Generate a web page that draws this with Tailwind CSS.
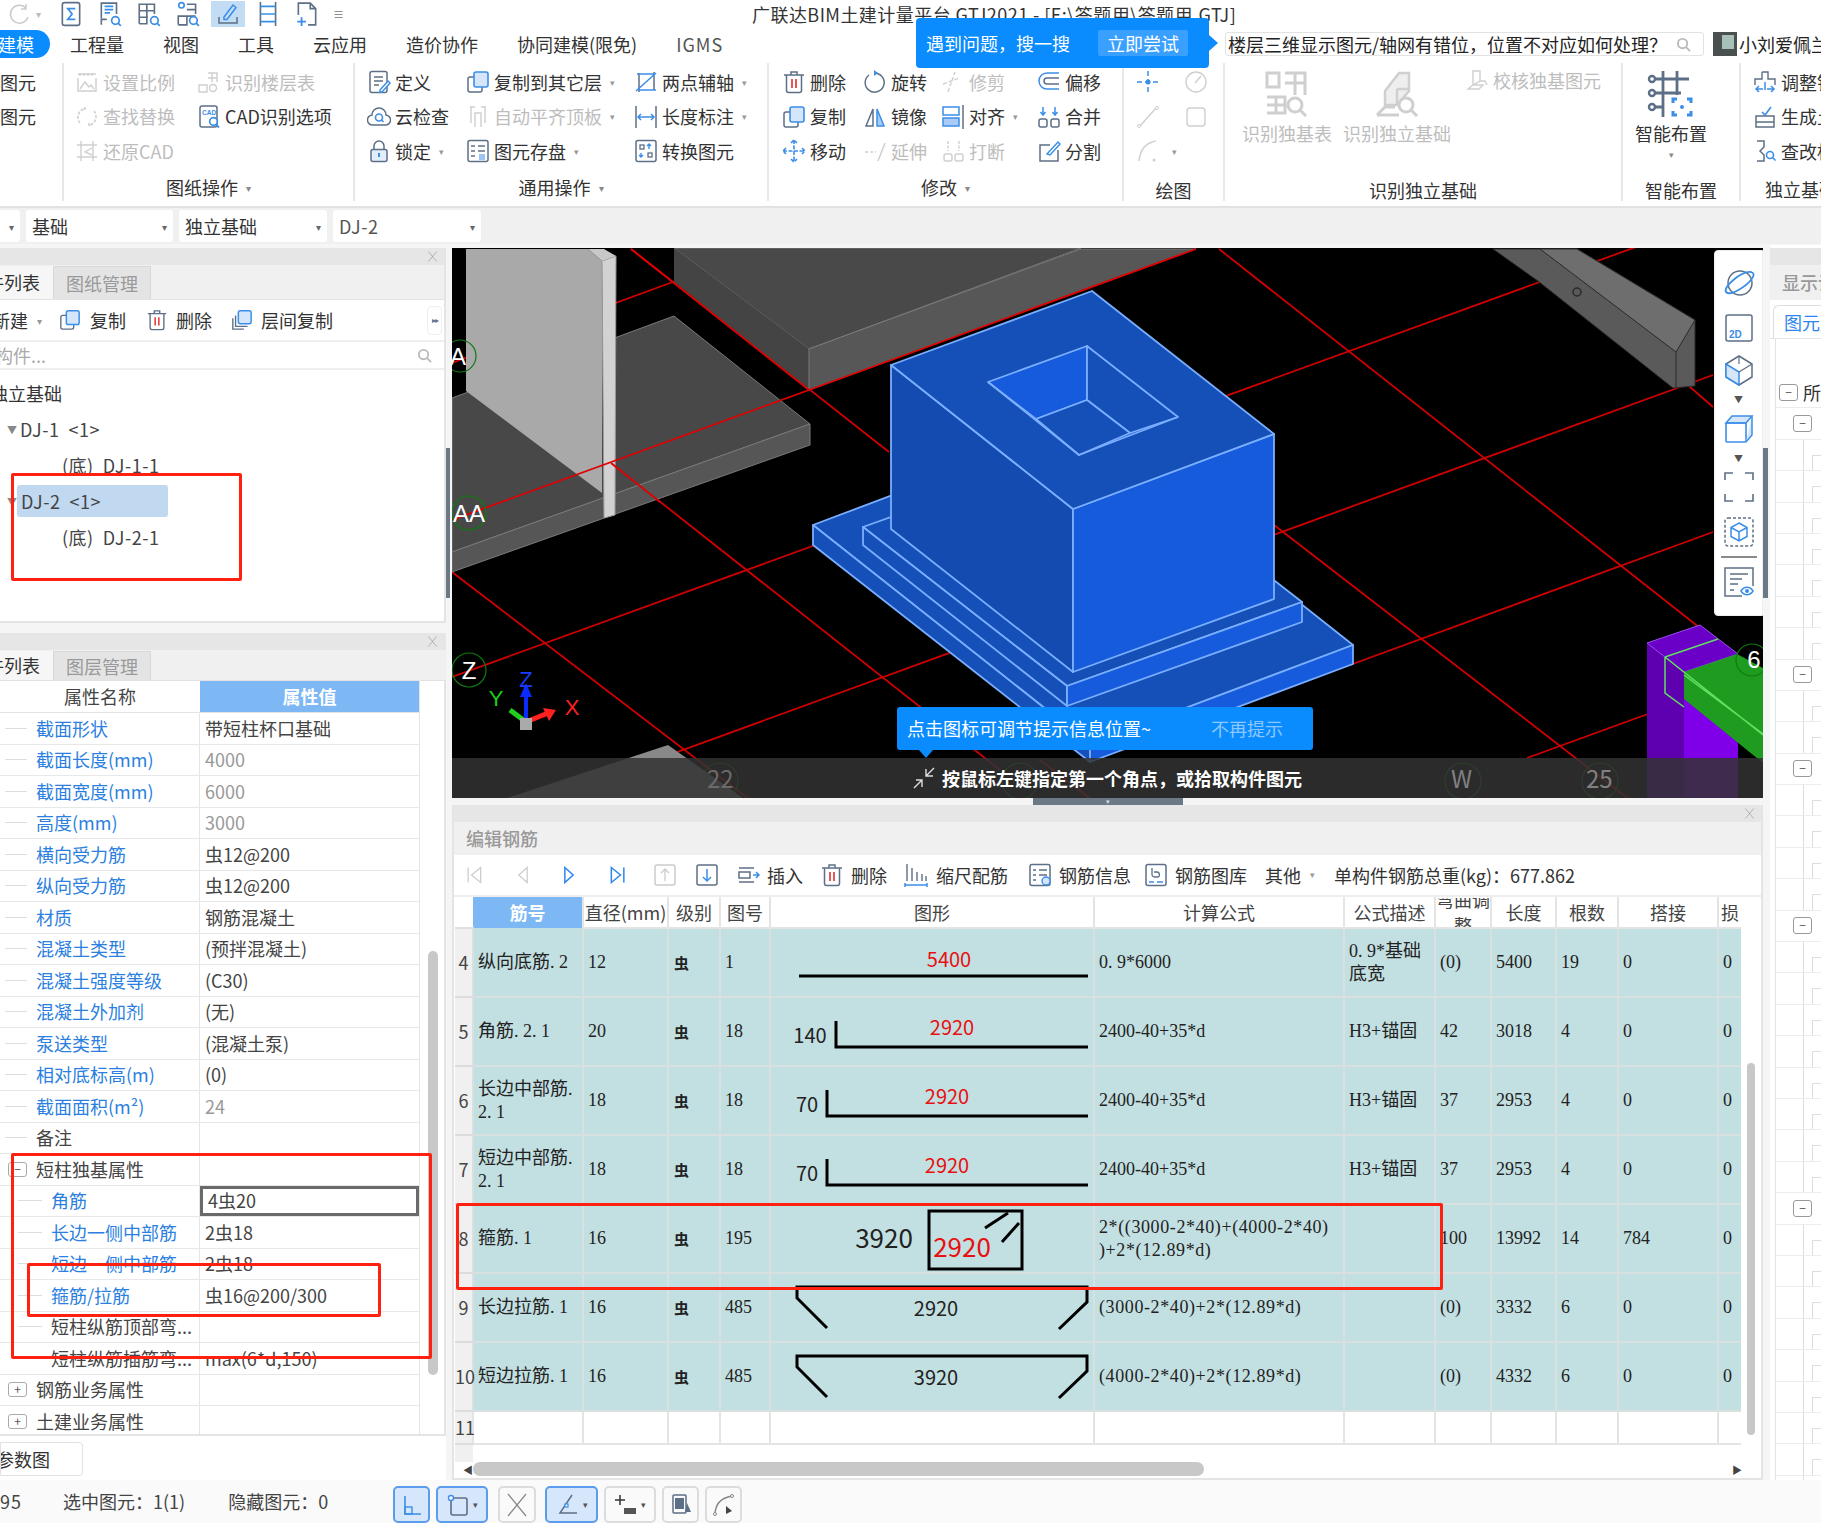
<!DOCTYPE html>
<html lang="zh">
<head>
<meta charset="UTF-8">
<title>广联达BIM土建计量平台 GTJ2021</title>
<script src="https://cdn.jsdelivr.net/npm/@tailwindcss/browser@4"></script>
</head>
<body class="bg-white">

<svg class="hidden">
  <defs>
    <symbol id="i-sum" viewBox="0 0 24 24"><rect x="4" y="1.5" width="16" height="21" rx="2" fill="none" stroke="#5d6f87" stroke-width="1.5"/><path d="M16 7H9l4 5-4 5h7" fill="none" stroke="#3b8ee8" stroke-width="1.6"/></symbol>
    <symbol id="i-planq" viewBox="0 0 24 24"><path d="M4 16V2h14v10M4 22v-5h5" fill="none" stroke="#5d6f87" stroke-width="1.5"/><path d="M7 5h8M7 8h8M7 11h5" stroke="#3b8ee8" stroke-width="1.5"/><circle cx="17" cy="18" r="3.5" fill="none" stroke="#3b8ee8" stroke-width="1.6"/><path d="M19.5 20.5l2.5 2.5" stroke="#3b8ee8" stroke-width="1.6"/></symbol>
    <symbol id="i-gridq" viewBox="0 0 24 24"><path d="M3 21V3h14v9M3 9h14M3 15h8M10 3v18H3" fill="none" stroke="#5d6f87" stroke-width="1.5"/><circle cx="17" cy="18" r="3.5" fill="none" stroke="#3b8ee8" stroke-width="1.6"/><path d="M19.5 20.5l2.5 2.5" stroke="#3b8ee8" stroke-width="1.6"/></symbol>
    <symbol id="i-grid2q" viewBox="0 0 24 24"><circle cx="6" cy="4" r="2.5" fill="none" stroke="#3b8ee8" stroke-width="1.5"/><path d="M3 22v-8h8v8H3M11 3h8v9M11 8h8M3 14h16" fill="none" stroke="#5d6f87" stroke-width="1.5"/><circle cx="17" cy="18" r="3.5" fill="none" stroke="#3b8ee8" stroke-width="1.6"/><path d="M19.5 20.5l2.5 2.5" stroke="#3b8ee8" stroke-width="1.6"/></symbol>
    <symbol id="i-pen" viewBox="0 0 24 24"><path d="M8 15L17 3l3 2.5-9 12H8z" fill="none" stroke="#3b8ee8" stroke-width="1.5"/><path d="M3 15v6h18v-6" fill="none" stroke="#5d6f87" stroke-width="1.5"/></symbol>
    <symbol id="i-cols" viewBox="0 0 24 24"><path d="M5 1v22M19 1v22" stroke="#5d6f87" stroke-width="1.5"/><path d="M5 5h14M5 12h14M5 19h14" stroke="#3b8ee8" stroke-width="1.6"/></symbol>
    <symbol id="i-docplus" viewBox="0 0 24 24"><path d="M4 13V2h11l5 5v15h-7M15 2v5h5" fill="none" stroke="#5d6f87" stroke-width="1.5"/><path d="M7 15v8M3 19h8" stroke="#3b8ee8" stroke-width="1.7"/></symbol>
    <symbol id="i-scale" viewBox="0 0 24 24"><path d="M3 4h18M5 3v3M9 3v3M13 3v3M17 3v3M21 8v13H3V8" fill="none" stroke="currentColor" stroke-width="1.4"/><path d="M5 19l5-7 4 5 2-2 3 4" fill="none" stroke="currentColor" stroke-width="1.4"/></symbol>
    <symbol id="i-tableq" viewBox="0 0 24 24"><path d="M2 22v-7h8v7H2M11 3h9v9M11 8h9M15 3v9" fill="none" stroke="currentColor" stroke-width="1.4"/><circle cx="16" cy="18" r="3.5" fill="none" stroke="currentColor" stroke-width="1.4"/></symbol>
    <symbol id="i-swap" viewBox="0 0 24 24"><path d="M5 18A9 9 0 0 1 10 3.5M19 6a9 9 0 0 1-5 14.5M10 2v4M14 18v4" fill="none" stroke="currentColor" stroke-width="1.6" stroke-dasharray="3 1.5"/></symbol>
    <symbol id="i-cadq" viewBox="0 0 24 24"><rect x="3" y="1" width="17" height="21" rx="2" fill="none" stroke="#5d6f87" stroke-width="1.5"/><text x="5" y="10" font-size="6.5" font-weight="700" fill="#3b8ee8" font-family="Liberation Sans">CAD</text><circle cx="16.5" cy="16.5" r="3.8" fill="#fff" stroke="#3b8ee8" stroke-width="1.7"/><path d="M19 19.5l3 3" stroke="#3b8ee8" stroke-width="1.8"/></symbol>
    <symbol id="i-restore" viewBox="0 0 24 24"><path d="M6 2v20M18 2v20M2 6h20M2 18h20M17 9l-7 4 7 3" fill="none" stroke="currentColor" stroke-width="1.4"/></symbol>
    <symbol id="i-def" viewBox="0 0 24 24"><rect x="3" y="1.5" width="17" height="21" rx="2" fill="none" stroke="#5d6f87" stroke-width="1.5"/><path d="M7 7h9M7 11h9M7 15h5" stroke="#5d6f87" stroke-width="1.3"/><path d="M13 20l8-9 2 2-8 9h-2z" fill="#fff" stroke="#3b8ee8" stroke-width="1.5"/></symbol>
    <symbol id="i-copy" viewBox="0 0 24 24"><rect x="2" y="7" width="14" height="15" rx="2" fill="none" stroke="#5d6f87" stroke-width="1.5"/><rect x="8" y="2" width="14" height="15" rx="2" fill="#d5e6fb" stroke="#3b8ee8" stroke-width="1.6"/></symbol>
    <symbol id="i-copy2" viewBox="0 0 24 24"><path d="M2 10v12h12M5 7v12h13" fill="none" stroke="#5d6f87" stroke-width="1.5"/><rect x="8" y="2" width="14" height="14" rx="2" fill="#d5e6fb" stroke="#3b8ee8" stroke-width="1.6"/></symbol>
    <symbol id="i-axis" viewBox="0 0 24 24"><path d="M5 3v19M20 2v18" stroke="#5d6f87" stroke-width="1.5"/><path d="M2 21L22 3M3 4h17M5 20h17" stroke="#3b8ee8" stroke-width="1.5"/></symbol>
    <symbol id="i-cloud" viewBox="0 0 24 24"><path d="M6 20a5 5 0 0 1-1-10 7 7 0 0 1 14 0 5 5 0 0 1-1 10z" fill="none" stroke="#5d6f87" stroke-width="1.5"/><circle cx="12" cy="12.5" r="3.5" fill="none" stroke="#3b8ee8" stroke-width="1.6"/><path d="M14.5 15l2 2" stroke="#3b8ee8" stroke-width="1.6"/></symbol>
    <symbol id="i-level" viewBox="0 0 24 24"><path d="M4 2h5M15 2h5M5 2v16M19 2v16" stroke="currentColor" stroke-width="1.4"/><path d="M9 22V8h6v14" fill="none" stroke="currentColor" stroke-width="1.4"/></symbol>
    <symbol id="i-dim" viewBox="0 0 24 24"><path d="M2 1v22M22 1v22" stroke="#5d6f87" stroke-width="1.5"/><path d="M4 12h16M7 9l-3 3 3 3M17 9l3 3-3 3" fill="none" stroke="#3b8ee8" stroke-width="1.5"/></symbol>
    <symbol id="i-lock" viewBox="0 0 24 24"><path d="M7 11V7a5 5 0 0 1 10 0v4" fill="none" stroke="#5d6f87" stroke-width="1.5"/><rect x="4" y="10.5" width="16" height="12" rx="2" fill="#e3eefc" stroke="#5d6f87" stroke-width="1.5"/><path d="M12 14v4" stroke="#3b8ee8" stroke-width="2"/></symbol>
    <symbol id="i-save" viewBox="0 0 24 24"><rect x="2" y="1.5" width="20" height="21" rx="2" fill="none" stroke="#5d6f87" stroke-width="1.5"/><path d="M5 7h4M12 7h7M5 12h4M12 12h7M5 17h4" stroke="#5d6f87" stroke-width="1.5"/><rect x="13" y="15" width="6" height="6" fill="#9cc5f5"/></symbol>
    <symbol id="i-conv" viewBox="0 0 24 24"><rect x="2" y="1.5" width="20" height="21" rx="2" fill="none" stroke="#5d6f87" stroke-width="1.5"/><rect x="6" y="6" width="4" height="4" fill="none" stroke="#5d6f87" stroke-width="1.3"/><rect x="14" y="14" width="4" height="4" fill="none" stroke="#5d6f87" stroke-width="1.3"/><path d="M15 10V6M7 14v4M13 7l2-2 2 2M5 16l2 2 2-2" fill="none" stroke="#3b8ee8" stroke-width="1.4"/></symbol>
    <symbol id="i-trash" viewBox="0 0 24 24"><path d="M2 5h20M9 5V2h6v3" fill="none" stroke="#5d6f87" stroke-width="1.5"/><path d="M4.5 5v15.5a2 2 0 0 0 2 2h11a2 2 0 0 0 2-2V5" fill="none" stroke="#5d6f87" stroke-width="1.5"/><path d="M10 9v9M14 9v9" stroke="#e53b3b" stroke-width="1.7"/></symbol>
    <symbol id="i-rotate" viewBox="0 0 24 24"><path d="M13 3.2A9.5 9.5 0 1 1 6 5" fill="none" stroke="#5d6f87" stroke-width="1.5"/><path d="M11 0l4 3-4 3z" fill="#3b8ee8"/></symbol>
    <symbol id="i-trim" viewBox="0 0 24 24"><path d="M2 14L18 8M7 22L14 2" fill="none" stroke="currentColor" stroke-width="1.4" stroke-dasharray="4 2"/></symbol>
    <symbol id="i-offset" viewBox="0 0 24 24"><path d="M22 3H10a8 8 0 0 0 0 16h12" fill="none" stroke="#3b8ee8" stroke-width="1.5"/><path d="M22 8H10a3 3 0 0 0 0 6h12" fill="none" stroke="#5d6f87" stroke-width="1.5"/></symbol>
    <symbol id="i-mirror" viewBox="0 0 24 24"><path d="M10 4L3 21h7z" fill="none" stroke="#5d6f87" stroke-width="1.5"/><path d="M14 4l7 17h-7z" fill="#a9cbf5" stroke="#3b8ee8" stroke-width="1.5"/></symbol>
    <symbol id="i-align" viewBox="0 0 24 24"><rect x="2" y="2" width="16" height="8" fill="none" stroke="#3b8ee8" stroke-width="1.5"/><rect x="2" y="13" width="16" height="8" fill="#a9cbf5" stroke="#3b8ee8" stroke-width="1.5"/><path d="M22 0v24" stroke="#5d6f87" stroke-width="1.5"/></symbol>
    <symbol id="i-merge" viewBox="0 0 24 24"><rect x="2" y="14" width="8" height="8" rx="2" fill="none" stroke="#5d6f87" stroke-width="1.5"/><rect x="14" y="14" width="8" height="8" rx="2" fill="none" stroke="#5d6f87" stroke-width="1.5"/><path d="M6 2v8M18 2v8M3.5 7L6 10l2.5-3M15.5 7L18 10l2.5-3" fill="none" stroke="#3b8ee8" stroke-width="1.5"/></symbol>
    <symbol id="i-move" viewBox="0 0 24 24"><path d="M12 1v22M1 12h22M9 4l3-3 3 3M9 20l3 3 3-3M4 9l-3 3 3 3M20 9l3 3-3 3" fill="none" stroke="#3b8ee8" stroke-width="1.6" stroke-dasharray="4 1.5"/></symbol>
    <symbol id="i-extend" viewBox="0 0 24 24"><path d="M2 13h11" stroke="currentColor" stroke-width="1.5" stroke-dasharray="3 2"/><path d="M15 22L22 4" stroke="currentColor" stroke-width="1.5"/></symbol>
    <symbol id="i-break" viewBox="0 0 24 24"><rect x="3" y="15" width="8" height="7" rx="2" fill="none" stroke="currentColor" stroke-width="1.4"/><rect x="14" y="15" width="8" height="7" rx="2" fill="none" stroke="currentColor" stroke-width="1.4"/><path d="M7 2v10M18 2v10" stroke="currentColor" stroke-width="1.4" stroke-dasharray="3 1.5"/></symbol>
    <symbol id="i-split" viewBox="0 0 24 24"><path d="M21 11v11H3V6h10" fill="none" stroke="#5d6f87" stroke-width="1.5"/><path d="M10 15L21 3l2 2-10 11z" fill="none" stroke="#3b8ee8" stroke-width="1.5"/></symbol>
    <symbol id="i-point" viewBox="0 0 24 24"><path d="M12 1v22M1 12h22" stroke="#3b8ee8" stroke-width="1.5" stroke-dasharray="5 3"/><circle cx="12" cy="12" r="2.5" fill="#3b8ee8"/></symbol>
    <symbol id="i-gauge" viewBox="0 0 24 24"><circle cx="12" cy="12" r="10" fill="none" stroke="currentColor" stroke-width="1.4"/><path d="M11 13l6-7" stroke="currentColor" stroke-width="1.4"/></symbol>
    <symbol id="i-line" viewBox="0 0 24 24"><path d="M3 22L21 2" stroke="currentColor" stroke-width="1.4"/><circle cx="3" cy="21" r="1.5" fill="#fff" stroke="currentColor"/><circle cx="21" cy="3" r="1.5" fill="#fff" stroke="currentColor"/></symbol>
    <symbol id="i-rect" viewBox="0 0 24 24"><rect x="3" y="3" width="18" height="18" rx="3" fill="none" stroke="currentColor" stroke-width="1.4"/></symbol>
    <symbol id="i-arc" viewBox="0 0 24 24"><path d="M3 22C4 12 8 4 20 2" fill="none" stroke="currentColor" stroke-width="1.5"/><circle cx="18" cy="21" r="1.5" fill="currentColor"/></symbol>
    <symbol id="i-bigtab" viewBox="0 0 48 48"><path d="M4 4h12v14H4zM22 4h20v22M22 14h20M32 4v22M4 28h18v16H4M4 36h18M13 28v16" fill="none" stroke="currentColor" stroke-width="3"/><circle cx="32" cy="36" r="7" fill="#fff" stroke="currentColor" stroke-width="3"/><path d="M37 41l6 6" stroke="currentColor" stroke-width="3"/></symbol>
    <symbol id="i-bigbox" viewBox="0 0 48 48"><path d="M12 22L26 4h10v18L24 36H12zM24 20h12M24 20v16" fill="#eee" stroke="currentColor" stroke-width="2.5"/><path d="M4 46l8-8h10M4 46h22" fill="none" stroke="currentColor" stroke-width="3"/><circle cx="33" cy="36" r="7" fill="#fff" stroke="currentColor" stroke-width="3"/><path d="M38 41l6 6" stroke="currentColor" stroke-width="3"/></symbol>
    <symbol id="i-check" viewBox="0 0 24 24"><path d="M8 3h7v10l-7 4zM3 21l5-4h10l-4 4z" fill="none" stroke="currentColor" stroke-width="1.4"/><path d="M15 13h5l2 4" fill="none" stroke="currentColor" stroke-width="1.4"/></symbol>
    <symbol id="i-smart" viewBox="0 0 48 48"><path d="M16 2v46M30 2v24M4 10h38M4 24h30M4 38h12" fill="none" stroke="#5d6f87" stroke-width="2.8"/><circle cx="5" cy="10" r="3" fill="#fff" stroke="#5d6f87" stroke-width="2.4"/><circle cx="5" cy="24" r="3" fill="#fff" stroke="#5d6f87" stroke-width="2.4"/><circle cx="5" cy="38" r="3" fill="#fff" stroke="#5d6f87" stroke-width="2.4"/><path d="M26 34v-4h4M40 30h4v4M44 42v4h-4M30 46h-4v-4" fill="none" stroke="#3b8ee8" stroke-width="3"/><circle cx="35" cy="38" r="2" fill="#3b8ee8"/></symbol>
    <symbol id="i-adjust" viewBox="0 0 24 24"><path d="M9 2h6v7h7v6M9 2v7H2v6" fill="none" stroke="#5d6f87" stroke-width="1.4"/><path d="M3 19h7M21 19h-7M6 16l-3 3 3 3M18 16l3 3-3 3M12 12v8" fill="none" stroke="#3b8ee8" stroke-width="1.5"/></symbol>
    <symbol id="i-gen" viewBox="0 0 24 24"><path d="M3 11h18v11H3zM3 17h18" fill="none" stroke="#5d6f87" stroke-width="1.5"/><path d="M9 7l3 3 6-8" fill="none" stroke="#3b8ee8" stroke-width="1.6"/></symbol>
    <symbol id="i-edit" viewBox="0 0 24 24"><path d="M4 2h7v6l-4 4 4 4v6H4" fill="none" stroke="#5d6f87" stroke-width="1.5"/><circle cx="17" cy="16" r="3.5" fill="none" stroke="#3b8ee8" stroke-width="1.6"/><path d="M19.5 18.5l3 3" stroke="#3b8ee8" stroke-width="1.6"/></symbol>
    <symbol id="i-first" viewBox="0 0 24 24"><path d="M5 3v18M20 3L9 12l11 9z" fill="none" stroke="currentColor" stroke-width="1.5"/></symbol>
    <symbol id="i-prev" viewBox="0 0 24 24"><path d="M17 3L7 12l10 9z" fill="none" stroke="currentColor" stroke-width="1.5"/></symbol>
    <symbol id="i-next" viewBox="0 0 24 24"><path d="M7 3l10 9-10 9z" fill="none" stroke="currentColor" stroke-width="1.8"/></symbol>
    <symbol id="i-last" viewBox="0 0 24 24"><path d="M19 3v18M4 3l11 9-11 9z" fill="none" stroke="currentColor" stroke-width="1.8"/></symbol>
    <symbol id="i-up" viewBox="0 0 24 24"><rect x="2" y="2" width="20" height="20" rx="2" fill="none" stroke="currentColor" stroke-width="1.5"/><path d="M12 18V7M8 10l4-4 4 4" fill="none" stroke="currentColor" stroke-width="1.3"/></symbol>
    <symbol id="i-down" viewBox="0 0 24 24"><rect x="2" y="2" width="20" height="20" rx="2" fill="none" stroke="#5d6f87" stroke-width="1.5"/><path d="M12 6v11M8 14l4 4 4-4" fill="none" stroke="#3b8ee8" stroke-width="1.5"/></symbol>
    <symbol id="i-insert" viewBox="0 0 24 24"><path d="M2 5h15M2 19h15" stroke="#5d6f87" stroke-width="1.5"/><rect x="2" y="9" width="11" height="6" fill="none" stroke="#5d6f87" stroke-width="1.5"/><path d="M16 12h6M19 9l3 3-3 3" fill="none" stroke="#3b8ee8" stroke-width="1.5"/></symbol>
    <symbol id="i-ruler" viewBox="0 0 24 24"><path d="M3 1v17M8 5v13M13 9v9M18 11v7M22 13v5" stroke="#5d6f87" stroke-width="1.4"/><path d="M1 22h22M1 20v4M23 20v4" stroke="#3b8ee8" stroke-width="1.5"/></symbol>
    <symbol id="i-info" viewBox="0 0 24 24"><rect x="2" y="1.5" width="20" height="21" rx="2" fill="none" stroke="#5d6f87" stroke-width="1.5"/><path d="M5 7h3M11 7h8M5 12h3M11 12h8M5 17h3" stroke="#5d6f87" stroke-width="1.3"/><circle cx="18" cy="18" r="4" fill="#d5e6fb" stroke="#3b8ee8" stroke-width="1.4"/></symbol>
    <symbol id="i-lib" viewBox="0 0 24 24"><rect x="2" y="1.5" width="20" height="21" rx="2" fill="none" stroke="#5d6f87" stroke-width="1.5"/><path d="M8 5v7a3 3 0 0 0 3 2h3c2 0 2-5-1-5h-3" fill="none" stroke="#5d6f87" stroke-width="1.3"/><path d="M5 19h5M13 19h6" stroke="#3b8ee8" stroke-width="1.7"/></symbol>
    <symbol id="i-orbit" viewBox="0 0 32 32"><circle cx="17" cy="16" r="12" fill="none" stroke="#5d6f87" stroke-width="1.5"/><path d="M3 25C0 20 18 4 28 5c3 1 4 3 0 8S8 30 3 25z" fill="none" stroke="#3b8ee8" stroke-width="1.8"/></symbol>
    <symbol id="i-2d" viewBox="0 0 32 32"><rect x="3" y="3" width="26" height="26" rx="2" fill="none" stroke="#5d6f87" stroke-width="1.5"/><text x="6" y="26" font-size="10" font-weight="700" fill="#3b8ee8" font-family="Liberation Sans">2D</text></symbol>
    <symbol id="i-cube" viewBox="0 0 32 32"><path d="M16 2l13 8v13l-13 8-13-8V10z" fill="none" stroke="#5d6f87" stroke-width="1.5"/><path d="M3 10l13 8v13L3 23z" fill="#d5e6fb" stroke="#3b8ee8" stroke-width="1.5"/><path d="M16 18L29 10M16 2v8" stroke="#5d6f87" stroke-width="1.2"/></symbol>
    <symbol id="i-box" viewBox="0 0 32 32"><path d="M3 10l6-7h20l-6 7z" fill="#d5e6fb" stroke="#3b8ee8" stroke-width="1.5"/><rect x="3" y="10" width="20" height="19" rx="1" fill="none" stroke="#3b8ee8" stroke-width="1.6"/><path d="M29 3v19l-6 7" fill="#d5e6fb" stroke="#3b8ee8" stroke-width="1.5"/></symbol>
    <symbol id="i-full" viewBox="0 0 32 32"><path d="M2 9V2h8M22 2h8v7M30 23v7h-8M10 30H2v-7" fill="none" stroke="#5d6f87" stroke-width="1.6"/></symbol>
    <symbol id="i-boxsel" viewBox="0 0 32 32"><rect x="2" y="2" width="28" height="28" rx="3" fill="none" stroke="#5d6f87" stroke-width="1.5" stroke-dasharray="3 2"/><path d="M16 7l8 4.5v9L16 25l-8-4.5v-9zM8 11.5l8 4.5 8-4.5M16 16v9" fill="none" stroke="#3b8ee8" stroke-width="1.5"/></symbol>
    <symbol id="i-list" viewBox="0 0 32 32"><path d="M19 30H2V2h28v18" fill="none" stroke="#5d6f87" stroke-width="1.5"/><path d="M7 8h18M7 13h12M7 18h8M7 24h4" stroke="#5d6f87" stroke-width="1.3"/><path d="M18 25c3-5 9-5 12 0-3 5-9 5-12 0z" fill="#fff" stroke="#3b8ee8" stroke-width="1.5"/><circle cx="24" cy="25" r="2" fill="#3b8ee8"/></symbol>
    <symbol id="i-ortho" viewBox="0 0 24 24"><path d="M5 3v18h16" fill="none" stroke="#3b8ee8" stroke-width="1.6"/><rect x="5" y="14" width="7" height="7" fill="none" stroke="#3b8ee8" stroke-width="1.4"/></symbol>
    <symbol id="i-snap" viewBox="0 0 24 24"><rect x="5" y="5" width="16" height="17" rx="2" fill="none" stroke="#5d6f87" stroke-width="1.6"/><circle cx="5" cy="5" r="2.5" fill="#fff" stroke="#3b8ee8" stroke-width="1.4"/></symbol>
    <symbol id="i-x" viewBox="0 0 24 24"><path d="M3 1l18 22M21 1L3 23" stroke="#888" stroke-width="1.2"/></symbol>
    <symbol id="i-angle" viewBox="0 0 24 24"><path d="M16 2L4 20h17" fill="none" stroke="#5d6f87" stroke-width="1.5"/><rect x="9" y="11" width="3" height="3" fill="#fff" stroke="#3b8ee8" stroke-width="1.2"/></symbol>
    <symbol id="i-plus" viewBox="0 0 24 24"><path d="M6 2v10M1 7h10" stroke="#333" stroke-width="1.5"/><rect x="10" y="15" width="12" height="6" fill="#555"/></symbol>
    <symbol id="i-layer" viewBox="0 0 24 24"><rect x="4" y="2" width="13" height="18" rx="1" fill="none" stroke="#5d6f87" stroke-width="1.5"/><rect x="6" y="5" width="9" height="11" fill="#5d6f87"/><path d="M18 10l4 9h-6z" fill="#5d6f87"/></symbol>
    <symbol id="i-curve" viewBox="0 0 24 24"><path d="M3 22C3 12 8 5 20 3" fill="none" stroke="#888" stroke-width="1.5"/><circle cx="3" cy="21" r="1.5" fill="#fff" stroke="#888"/><circle cx="20" cy="3" r="1.5" fill="#fff" stroke="#888"/><path d="M14 13l6 5-6 3z" fill="#444"/></symbol>
  </defs>
</svg>

<div class="relative w-[1821px] h-[1523px] overflow-hidden flex flex-col text-[18px] text-[#333] font-['Noto_Sans_CJK_SC','Liberation_Sans',sans-serif]">

  <!-- title bar -->
  <div class="h-[28px] flex items-center shrink-0 leading-none">
    <div class="w-[752px] shrink-0 flex items-center pl-[8px] gap-[13px] text-[#bbb]">
      <svg class="w-[24px] h-[24px] shrink-0" viewBox="0 0 24 24"><path d="M18 6A9 9 0 1 0 20 15M18 2v5h-5" fill="none" stroke="#ccc" stroke-width="1.5"/></svg>
      <span class="text-[10px] -ml-[9px]">▾</span>
      <svg class="w-[26px] h-[26px] ml-[4px] shrink-0"><use href="#i-sum"/></svg>
      <svg class="w-[26px] h-[26px] shrink-0"><use href="#i-planq"/></svg>
      <svg class="w-[26px] h-[26px] shrink-0"><use href="#i-gridq"/></svg>
      <svg class="w-[26px] h-[26px] shrink-0"><use href="#i-grid2q"/></svg>
      <div class="w-[34px] h-[26px] bg-[#c2dcf3] flex items-center justify-center -mx-[3px] shrink-0"><svg class="w-[26px] h-[24px]"><use href="#i-pen"/></svg></div>
      <svg class="w-[26px] h-[26px] shrink-0"><use href="#i-cols"/></svg>
      <svg class="w-[26px] h-[26px] shrink-0"><use href="#i-docplus"/></svg>
      <span class="text-[11px] text-[#777]">≡</span>
    </div>
    <div class="whitespace-nowrap text-[#333] tracking-[0.45px]">广联达BIM土建计量平台 GTJ2021 - [E:\答题用\答题用.GTJ]</div>
  </div>

  <!-- menu tabs -->
  <div class="h-[32px] flex items-center shrink-0 whitespace-nowrap">
    <div class="h-[28px] w-[50px] shrink-0 bg-[#0a8cff] rounded-r-full text-white flex items-center justify-end pr-[16px] overflow-hidden">建模</div>
    <div class="w-[675px] shrink-0 flex items-center gap-[39px] ml-[20px] text-[#333]">
      <span>工程量</span><span>视图</span><span>工具</span><span>云应用</span><span>造价协作</span><span>协同建模(限免)</span><span class="tracking-[1px] text-[#555]">IGMS</span>
    </div>
    <div class="ml-[480px] w-[479px] h-[24px] border border-[#e2e2e2] rounded-[3px] flex items-center pl-[2px] pr-[12px] justify-between overflow-hidden text-[#222] shrink-0">
      <span class="overflow-hidden">楼层三维显示图元/轴网有错位，位置不对应如何处理？</span>
      <svg class="w-[15px] h-[15px] shrink-0" viewBox="0 0 16 16"><circle cx="7" cy="7" r="5" fill="none" stroke="#bbb" stroke-width="2"/><path d="M11 11l4 4" stroke="#bbb" stroke-width="2"/></svg>
    </div>
    <div class="w-[24px] h-[24px] ml-[9px] bg-[#4a4f50] shrink-0 overflow-hidden"><div class="w-[12px] h-[14px] bg-[#a7c0b8] ml-[9px] mt-[3px]"></div></div>
    <span class="ml-[2px] text-[#222]">小刘爱佩兰</span>
  </div>

  <!-- ribbon -->
  <div id="ribbon" class="h-[148px] flex shrink-0 border-b-2 border-[#e2e2e2] overflow-hidden"></div>

  <!-- combo bar -->
  <div class="h-[37px] shrink-0 bg-[#f0f0f0] flex items-center gap-[6px] -ml-[20px] border-b border-[#f6f6f6]">
    <div class="w-[40px] h-[32px] bg-white rounded-[3px] flex items-center justify-end pr-[6px] text-[10px] text-[#666]">▾</div>
    <div class="w-[147px] h-[32px] bg-white rounded-[3px] flex items-center justify-between px-[6px]"><span>基础</span><span class="text-[10px] text-[#666]">▾</span></div>
    <div class="w-[148px] h-[32px] bg-white rounded-[3px] flex items-center justify-between px-[6px]"><span>独立基础</span><span class="text-[10px] text-[#666]">▾</span></div>
    <div class="w-[148px] h-[32px] bg-white rounded-[3px] flex items-center justify-between px-[6px]"><span class="text-[#555] tracking-[0.5px]">DJ-2</span><span class="text-[10px] text-[#666]">▾</span></div>
  </div>

  <!-- main area -->
  <div class="flex-1 flex min-h-0 bg-[#f5f5f5]">

    <!-- left column -->
    <div class="w-[446px] shrink-0 pt-[3px] flex flex-col gap-[10px] overflow-hidden">
      <div class="h-[375px] bg-white border-r-2 border-b-2 border-[#e4e4e4] flex flex-col shrink-0">
        <div class="h-[17px] bg-[#e6e6e6] flex items-center justify-end pr-[6px] shrink-0"><svg class="w-[11px] h-[11px]"><use href="#i-x"/></svg></div>
        <div class="h-[35px] bg-[#f0f0f0] flex items-end shrink-0 border-b border-[#e2e2e2]">
          <div class="w-[53px] h-[33px] bg-[#f6f6f6] flex items-center justify-end pr-[13px] overflow-hidden whitespace-nowrap">构件列表</div>
          <div class="w-[98px] h-[33px] bg-[#e4e4e4] border-x border-t border-[#d8d8d8] flex items-center justify-center text-[#999]">图纸管理</div>
        </div>
        <div class="h-[42px] flex items-center shrink-0 border-b-2 border-[#eee] relative">
          <span class="w-[28px] flex justify-end overflow-hidden whitespace-nowrap"><span class="shrink-0">新建</span></span>
          <span class="text-[10px] text-[#999] ml-[9px]">▾</span>
          <svg class="w-[22px] h-[22px] ml-[17px]"><use href="#i-copy"/></svg><span class="ml-[9px]">复制</span>
          <svg class="w-[22px] h-[22px] ml-[20px]"><use href="#i-trash"/></svg><span class="ml-[8px]">删除</span>
          <svg class="w-[22px] h-[22px] ml-[19px]"><use href="#i-copy2"/></svg><span class="ml-[8px]">层间复制</span>
          <div class="ml-[94px] w-[15px] h-[29px] border border-[#eee] rounded-[4px] text-[8px] text-[#5d6f87] flex items-center justify-center tracking-[-1px]">▸▸</div>
        </div>
        <div class="h-[28px] flex items-center justify-between pr-[12px] shrink-0 border-b-2 border-[#eee]">
          <span class="w-[46px] flex justify-end overflow-hidden whitespace-nowrap text-[#aaa]"><span class="shrink-0">搜索构件...</span></span>
          <svg class="w-[15px] h-[15px]" viewBox="0 0 16 16"><circle cx="7" cy="7" r="5" fill="none" stroke="#bbb" stroke-width="2"/><path d="M11 11l4 4" stroke="#bbb" stroke-width="2"/></svg>
        </div>
        <div class="flex-1 pt-[5px] overflow-hidden">
          <div class="h-[36px] flex items-center"><span class="w-[62px] flex justify-end overflow-hidden whitespace-nowrap"><span class="shrink-0">独立基础</span></span></div>
          <div class="h-[36px] flex items-center pl-[7px] gap-[3px]"><span class="text-[10px] text-[#888]">▼</span><span class="tracking-[0.5px] text-[#444]">DJ-1 &nbsp;&lt;1&gt;</span></div>
          <div class="h-[36px] flex items-center pl-[62px] tracking-[0.5px] text-[#444]">(底) &nbsp;DJ-1-1</div>
          <div class="h-[36px] flex items-center pl-[7px]"><span class="text-[10px] text-[#888] w-[10px]">▼</span><span class="w-[151px] h-[32px] bg-[#c0d8f0] rounded-[3px] flex items-center pl-[4px] tracking-[0.5px] text-[#444]">DJ-2 &nbsp;&lt;1&gt;</span></div>
          <div class="h-[36px] flex items-center pl-[62px] tracking-[0.5px] text-[#444]">(底) &nbsp;DJ-2-1</div>
        </div>
      </div>

      <div class="flex-1 min-h-0 flex flex-col">
        <div class="h-[17px] bg-[#e6e6e6] flex items-center justify-end pr-[8px] shrink-0"><svg class="w-[11px] h-[11px]"><use href="#i-x"/></svg></div>
        <div class="h-[31px] bg-[#f0f0f0] flex items-end shrink-0 border-b border-[#e2e2e2]">
          <div class="w-[53px] h-[29px] bg-[#f6f6f6] flex items-center justify-end pr-[13px] overflow-hidden whitespace-nowrap">构件列表</div>
          <div class="w-[98px] h-[29px] bg-[#e4e4e4] border-x border-t border-[#d8d8d8] flex items-center justify-center text-[#999]">图层管理</div>
        </div>
        <div class="flex bg-white border-r-2 border-b-2 border-[#e4e4e4] h-[755px] shrink-0">
          <div class="w-[420px] shrink-0 border-r border-[#e4e4e4]">
            <div class="h-[32px] flex border-b border-[#e4e4e4]">
              <div class="w-[200px] flex items-center justify-center text-[#444]">属性名称</div>
              <div class="flex-1 bg-[#7db8f5] flex items-center justify-center text-white font-bold">属性值</div>
            </div>
            <div id="props"></div>
          </div>
          <div class="flex-1 pl-[8px]"><div class="w-[10px] h-[424px] mt-[270px] bg-[#c8c8c8] rounded-full"></div></div>
        </div>
        <div class="flex-1 bg-white pt-[6px]">
          <div class="w-[83px] h-[34px] bg-white border border-[#e2e2e2] rounded-r-[4px] flex items-center justify-end pr-[32px] overflow-hidden whitespace-nowrap">参数图</div>
        </div>
      </div>
    </div>

    <!-- splitter -->
    <div class="w-[6px] shrink-0 flex flex-col"><div class="w-[4px] h-[150px] mt-[203px] bg-[#6b7885]"></div></div>

    <!-- center column -->
    <div class="w-[1311px] shrink-0 pt-[3px] flex flex-col overflow-hidden">
      <div class="relative h-[550px] shrink-0 bg-black overflow-hidden">
        <svg class="absolute inset-0" width="1311" height="550" viewBox="452 248 1311 550">
          <g stroke="#d00000" stroke-width="1.8" fill="none">
            <path d="M452 363L700 272"/>
            <path d="M452 677L1713 219"/>
            <path d="M452 834L1713 375"/>
            <path d="M1350 665L1713 532"/>
            <path d="M1527 758L1700 695"/>
            <path d="M631 249L889 452"/>
            <path d="M1219 249L1700 628"/>
            <path d="M1274 525L1630 800"/>
            <path d="M611 463L1000 770"/>
            <path d="M452 572L750 800"/>
            <path d="M1682 380L1713 407"/>
            <path d="M1040 760L1196 880"/>
          </g>
          <!-- grey slabs and wall -->
          <polygon points="674,248 809,349 1081,248" fill="#494949" stroke="#7a7a7a"/>
          <polygon points="674,248 674,282 809,390 809,349" fill="#444"/>
          <polygon points="809,349 809,390 1196,249 1081,249" fill="#575757" stroke="#7a7a7a"/>
          <polygon points="452,398 674,316 810,424 452,552" fill="#484848" stroke="#7a7a7a"/>
          <polygon points="452,552 810,424 810,445 452,572" fill="#565656" stroke="#7a7a7a"/>
          <polygon points="466,249 588,249 602,261 602,493 466,391" fill="#a9a9a9"/>
          <polygon points="602,261 616,256 615,515 604,518" fill="#d2d2d2" stroke="#999"/>
          <polygon points="588,249 604,249 616,256 602,261" fill="#c8c8c8"/>
          <path d="M452 520L1196 249M631 249L809 390" stroke="#e00000" stroke-width="1.8" fill="none"/>
          <path d="M611 463L660 502" stroke="#e00000" stroke-width="1.8" fill="none"/>
          <!-- beam at top right -->
          <polygon points="1493,249 1577,249 1695,320 1695,386 1673,388 1538,281" fill="#5a5a5a" stroke="#2a2a2a"/>
          <polygon points="1540,249 1577,249 1695,320 1676,352" fill="#6e6e6e" stroke="#2a2a2a"/>
          <path d="M1676 352V388" stroke="#2a2a2a"/>
          <circle cx="1577" cy="292" r="4" fill="none" stroke="#2a2a2a" stroke-width="1.5"/>
          <!-- blue foundation -->
          <g stroke="#7aaeff" stroke-width="1.8" stroke-linejoin="round">
            <polygon points="813,525 1076,426 1353,645 1090,744" fill="#1450b8"/>
            <polygon points="813,525 1090,744 1090,762 813,545" fill="#1450b8"/>
            <polygon points="1090,744 1353,645 1353,664 1090,762" fill="#165bdc"/>
            <polygon points="863,527 1098,443 1302,602 1067,686" fill="#1450b8"/>
            <polygon points="863,527 1067,686 1067,706 863,545" fill="#1450b8"/>
            <polygon points="1067,686 1302,602 1302,622 1067,706" fill="#165bdc"/>
            <polygon points="891,365 1073,509 1073,672 891,529" fill="#134bb0"/>
            <polygon points="1073,509 1274,434 1274,599 1073,672" fill="#165bdc"/>
            <polygon points="1092,291 891,365 1073,509 1274,434" fill="#1450b8"/>
            <polygon points="1087,346 988,382 1036,419 1087,400" fill="#165bdc"/>
            <polygon points="1087,346 1178,417 1130,433 1087,400" fill="#1450b8"/>
            <polygon points="1036,419 1087,400 1130,433 1079,455" fill="#1450b8"/>
            <path d="M988 382L1079 455L1178 417" fill="none"/>
          </g>
          <!-- purple column, green beam -->
          <polygon points="1647,643 1684,672 1684,798 1647,798" fill="#5f00b0"/>
          <polygon points="1684,672 1738,654 1738,798 1684,798" fill="#7f00e8"/>
          <polygon points="1647,643 1700,625 1738,654 1684,672" fill="#6a00c8" stroke="#9a4cf0"/>
          <polygon points="1684,672 1737,654 1763,668 1763,763 1684,699" fill="#1f9c1f"/>
          <path d="M1684 675L1763 734M1665 657L1718 639M1665 657L1763 735M1665 657V693L1684 707" stroke="#5fe05f" stroke-width="1.5" fill="none"/>
          <!-- axis labels -->
          <g fill="none" stroke="#0f7a0f" stroke-width="1.2">
            <circle cx="460" cy="356" r="16"/><circle cx="469" cy="513" r="17"/><circle cx="469" cy="670" r="17"/><circle cx="1752" cy="660" r="16"/>
            <circle cx="1463" cy="781" r="18"/><circle cx="1600" cy="781" r="18"/><circle cx="720" cy="781" r="18"/><circle cx="1020" cy="781" r="18"/>
          </g>
          <g fill="#fff" font-family="Liberation Sans" font-size="24" text-anchor="middle">
            <text x="458" y="365">A</text><text x="469" y="522">AA</text><text x="469" y="679">Z</text><text x="1754" y="668">6</text>
          </g>
          <!-- triad -->
          <path d="M526 718V695" stroke="#0a2cff" stroke-width="4"/><path d="M520 697l6-14 6 14z" fill="#0a2cff"/>
          <path d="M526 722l-16-12" stroke="#1fd01f" stroke-width="5"/><path d="M526 722l22-9" stroke="#ff2020" stroke-width="5"/><path d="M543 708l13 2-7 11z" fill="#ff2020"/>
          <rect x="520" y="718" width="12" height="12" fill="#aaa"/>
          <g font-family="Liberation Sans" font-size="22" text-anchor="middle">
            <text x="526" y="687" fill="#1a3cff">Z</text><text x="496" y="706" fill="#18d018">Y</text><text x="572" y="715" fill="#ff2020">X</text>
          </g>
          <polygon points="507,798 668,745 743,798" fill="#888"/>
        </svg>

        <!-- hint bubble -->
        <div class="absolute left-[445px] top-[459px] w-[416px] h-[43px] bg-[#0a8cff] rounded-[3px] flex items-center pl-[10px] whitespace-nowrap text-white">
          <span class="w-[304px]">点击图标可调节提示信息位置~</span><span class="text-[#8cc8ff]">不再提示</span>
          <div class="absolute left-[22px] top-[43px] w-0 h-0 border-x-[7px] border-x-transparent border-t-[8px] border-t-[#0a8cff]"></div>
        </div>

        <!-- command line -->
        <div class="absolute left-0 right-0 bottom-0 h-[40px] bg-[#333]/85 flex items-center pl-[460px]">
          <svg class="w-[24px] h-[24px] mr-[6px] shrink-0" viewBox="0 0 24 24"><path d="M22 2l-8 8M14 3v7h7M2 22l8-8M4 14h6v7" fill="none" stroke="#ddd" stroke-width="1.4"/></svg>
          <span class="text-white font-bold whitespace-nowrap">按鼠标左键指定第一个角点，或拾取构件图元</span>
          <span class="absolute left-[255px] top-[2px] text-[24px] text-[#6a6a6a]">22</span>
          <span class="absolute left-[999px] top-[2px] text-[24px] text-[#808080]">W</span>
          <span class="absolute left-[1134px] top-[2px] text-[24px] text-[#808080]">25</span>
        </div>

        <!-- view toolbar -->
        <div class="absolute right-0 top-[2px] w-[49px] h-[366px] bg-white rounded-l-[4px] border border-[#eee] flex flex-col items-center pt-[16px] text-[#555]">
          <svg class="w-[32px] h-[32px] shrink-0"><use href="#i-orbit"/></svg>
          <svg class="w-[32px] h-[32px] mt-[13px] shrink-0"><use href="#i-2d"/></svg>
          <svg class="w-[32px] h-[32px] mt-[10px] shrink-0"><use href="#i-cube"/></svg>
          <span class="text-[9px] leading-[12px] mt-[8px] shrink-0">▼</span>
          <svg class="w-[32px] h-[32px] mt-[7px] shrink-0"><use href="#i-box"/></svg>
          <span class="text-[9px] leading-[12px] mt-[8px] shrink-0">▼</span>
          <svg class="w-[32px] h-[32px] mt-[6px] shrink-0"><use href="#i-full"/></svg>
          <svg class="w-[32px] h-[32px] mt-[13px] shrink-0"><use href="#i-boxsel"/></svg>
          <div class="w-[36px] h-[2px] bg-[#8a8a8a] mt-[8px] shrink-0"></div>
          <svg class="w-[32px] h-[32px] mt-[8px] shrink-0"><use href="#i-list"/></svg>
        </div>
      </div>

      <div class="h-[7px] shrink-0 flex justify-center"><div class="w-[150px] h-[7px] bg-[#6b7885] text-[7px] leading-[7px] text-center text-[#ddd]">▾</div></div>

      <!-- rebar editor -->
      <div class="flex-1 min-h-0 bg-white border-x-2 border-b-2 border-[#e4e4e4] flex flex-col">
        <div class="h-[17px] bg-[#e6e6e6] flex items-center justify-end pr-[6px] shrink-0"><svg class="w-[11px] h-[11px]"><use href="#i-x"/></svg></div>
        <div class="h-[33px] bg-[#f0f0f0] flex items-center pl-[12px] text-[#999] font-medium shrink-0">编辑钢筋</div>
        <div class="h-[42px] flex items-center pl-[10px] whitespace-nowrap shrink-0 border-b-2 border-[#eee]">
          <svg class="w-[20px] h-[24px] text-[#ccc] shrink-0"><use href="#i-first"/></svg>
          <svg class="w-[20px] h-[24px] ml-[29px] text-[#ccc] shrink-0"><use href="#i-prev"/></svg>
          <svg class="w-[20px] h-[24px] ml-[26px] text-[#2f86ee] shrink-0"><use href="#i-next"/></svg>
          <svg class="w-[20px] h-[24px] ml-[29px] text-[#2f86ee] shrink-0"><use href="#i-last"/></svg>
          <svg class="w-[24px] h-[24px] ml-[25px] text-[#ccc] shrink-0"><use href="#i-up"/></svg>
          <svg class="w-[24px] h-[24px] ml-[18px] shrink-0"><use href="#i-down"/></svg>
          <svg class="w-[24px] h-[24px] ml-[18px] shrink-0"><use href="#i-insert"/></svg><span class="ml-[6px]">插入</span>
          <svg class="w-[24px] h-[24px] ml-[17px] shrink-0"><use href="#i-trash"/></svg><span class="ml-[7px]">删除</span>
          <svg class="w-[24px] h-[24px] ml-[17px] shrink-0"><use href="#i-ruler"/></svg><span class="ml-[8px]">缩尺配筋</span>
          <svg class="w-[24px] h-[24px] ml-[20px] shrink-0"><use href="#i-info"/></svg><span class="ml-[7px]">钢筋信息</span>
          <svg class="w-[24px] h-[24px] ml-[13px] shrink-0"><use href="#i-lib"/></svg><span class="ml-[7px]">钢筋图库</span>
          <span class="ml-[18px]">其他</span><span class="text-[9px] text-[#999] ml-[9px]">▾</span>
          <span class="ml-[19px] text-[#333]">单构件钢筋总重(kg)：677.862</span>
        </div>
        <div class="flex-1 min-h-0 flex pl-[1px]">
          <div class="w-[1287px] shrink-0">
            <table class="table-fixed w-[1286px] border-collapse font-['Liberation_Serif','Noto_Sans_CJK_SC',serif] text-[#222]">
              <colgroup>
                <col class="w-[18px]"><col class="w-[110px]"><col class="w-[85px]"><col class="w-[52px]"><col class="w-[50px]"><col class="w-[324px]"><col class="w-[250px]"><col class="w-[91px]"><col class="w-[56px]"><col class="w-[65px]"><col class="w-[62px]"><col class="w-[100px]"><col class="w-[23px]">
              </colgroup>
              <thead id="rebarHead"></thead>
              <tbody id="rebarBody"></tbody>
            </table>
            <div class="h-[17px] w-[18px] bg-[#f0f0f0]"></div>
            <div class="h-[14px] flex items-center">
              <span class="w-[18px] text-right text-[10px] text-[#444]">◀</span>
              <div class="w-[731px] h-[14px] bg-[#c8c8c8] rounded-full"></div>
              <span class="flex-1 text-right text-[10px] text-[#444]">▶</span>
            </div>
          </div>
          <div class="pl-[5px]"><div class="w-[8px] h-[372px] mt-[166px] bg-[#c8c8c8] rounded-full"></div></div>
        </div>
      </div>
    </div>

    <!-- splitter -->
    <div class="w-[7px] shrink-0 flex flex-col"><div class="w-[5px] h-[150px] mt-[203px] bg-[#6b7885]"></div></div>

    <!-- right column -->
    <div class="flex-1 min-w-0 pt-[3px] flex flex-col overflow-hidden bg-white">
      <div class="h-[17px] bg-[#e6e6e6] shrink-0"></div>
      <div class="h-[35px] bg-[#f0f0f0] flex items-center pl-[12px] text-[#999] whitespace-nowrap shrink-0 font-medium">显示设置</div>
      <div class="h-[39px] flex items-end pl-[3px] shrink-0 border-b border-[#e4e4e4]"><div class="w-[60px] h-[33px] border-l border-t border-[#ddd] rounded-tl-[6px] flex items-center pl-[10px] text-[#2f86ee] whitespace-nowrap">图元显示</div></div>
      <div id="showRows" class="flex-1 min-h-0 ml-[5px] border-l border-[#e4e4e4] pt-[38px]"></div>
    </div>
  </div>

  <!-- status bar -->
  <div class="h-[43px] shrink-0 bg-[#fafafa] flex items-end relative">
    <div class="h-[43px] flex items-center text-[#444] whitespace-nowrap w-[393px]">
      <span class="tracking-[1px]">95</span><span class="ml-[41px]">选中图元：1(1)</span><span class="ml-[43px]">隐藏图元：0</span>
    </div>
    <div class="flex gap-[6px] h-[37px]">
      <div class="w-[37px] bg-[#d6e6fb] border-2 border-[#5b9cec] rounded-[5px] flex items-center justify-center"><svg class="w-[24px] h-[24px]"><use href="#i-ortho"/></svg></div>
      <div class="w-[52px] bg-[#d6e6fb] border-2 border-[#5b9cec] rounded-[5px] flex items-center justify-center gap-[3px]"><svg class="w-[24px] h-[24px]"><use href="#i-snap"/></svg><span class="text-[9px] text-[#555]">▾</span></div>
      <div class="w-[38px] ml-[4px] border-2 border-[#dcdcdc] rounded-[5px] flex items-center justify-center"><svg class="w-[24px] h-[26px]"><use href="#i-x"/></svg></div>
      <div class="w-[53px] ml-[3px] bg-[#d6e6fb] border-2 border-[#5b9cec] rounded-[5px] flex items-center justify-center gap-[3px]"><svg class="w-[24px] h-[24px]"><use href="#i-angle"/></svg><span class="text-[9px] text-[#555]">▾</span></div>
      <div class="w-[52px] border-2 border-[#dcdcdc] rounded-[5px] flex items-center justify-center gap-[3px]"><svg class="w-[24px] h-[24px]"><use href="#i-plus"/></svg><span class="text-[9px] text-[#555]">▾</span></div>
      <div class="w-[37px] border-2 border-[#dcdcdc] rounded-[5px] flex items-center justify-center"><svg class="w-[24px] h-[24px]"><use href="#i-layer"/></svg></div>
      <div class="w-[37px] border-2 border-[#dcdcdc] rounded-[5px] flex items-center justify-center"><svg class="w-[24px] h-[24px]"><use href="#i-curve"/></svg></div>
    </div>
  </div>

  <!-- "search" popup over the title -->
  <div class="absolute left-[916px] top-[18px] w-[293px] h-[50px] bg-[#0a8cff] rounded-[4px] flex items-center pl-[10px] text-white whitespace-nowrap">
    <span>遇到问题，搜一搜</span>
    <span class="ml-[28px] w-[90px] h-[26px] bg-[#3aa0ff] rounded-[2px] flex items-center justify-center">立即尝试</span>
    <div class="absolute left-[293px] top-[17px] w-0 h-0 border-y-[8px] border-y-transparent border-l-[9px] border-l-[#0a8cff]"></div>
  </div>

  <!-- red annotation boxes drawn on the screenshot -->
  <div class="absolute left-[11px] top-[473px] w-[231px] h-[108px] border-[3px] border-[#ff2010] rounded-[2px]"></div>
  <div class="absolute left-[11px] top-[1153px] w-[421px] h-[206px] border-[3px] border-[#ff2010] rounded-[2px]"></div>
  <div class="absolute left-[27px] top-[1263px] w-[354px] h-[54px] border-[3px] border-[#ff2010] rounded-[2px]"></div>
  <div class="absolute left-[456px] top-[1203px] w-[987px] h-[87px] border-[3px] border-[#ff2010] rounded-[2px]"></div>
</div>

<script>
  // ---- ribbon ----
  const item = (icon, label, off, caret) => `
    <div class="flex items-center gap-[4px] h-[34.5px] whitespace-nowrap ${off ? 'text-[#bdbdbd]' : 'text-[#333]'}">
      <svg class="w-[24px] h-[24px] shrink-0 ${off ? 'text-[#cfcfcf]' : 'text-[#5d6f87]'}"><use href="#${icon}"/></svg>
      <span>${label}</span>${caret ? '<span class="text-[9px] text-[#999] ml-[4px]">▾</span>' : ''}
    </div>`;
  const groupLabel = (text, caret, low) => `
    <div class="absolute left-0 right-0 ${low ? 'top-[110px]' : 'top-[107px]'} h-[34px] flex items-center justify-center text-[#333] whitespace-nowrap gap-[8px]">
      <span>${text}</span>${caret ? '<span class="text-[10px] text-[#888]">▾</span>' : ''}
    </div>`;
  const sep = 'relative h-[138px] mt-[3px] border-r-2 border-[#e8e8e8] shrink-0 overflow-hidden';
  const big = (icon, label, off, w) => `
    <div class="flex flex-col items-center ${w} pt-[6px] whitespace-nowrap ${off ? 'text-[#bdbdbd]' : 'text-[#333]'}">
      <svg class="w-[48px] h-[48px] ${off ? 'text-[#cfcfcf]' : 'text-[#5d6f87]'}"><use href="#${icon}"/></svg>
      <span class="mt-[4px] leading-[24px]">${label}</span>
    </div>`;

  document.getElementById('ribbon').innerHTML = `
    <div class="w-[64px] ${sep}">
      <div class="absolute right-[26px] top-[2px] flex flex-col whitespace-nowrap items-end">
        <div class="h-[34.5px] flex items-center">查找图元</div>
        <div class="h-[34.5px] flex items-center">还原图元</div>
      </div>
    </div>
    <div class="w-[291px] ${sep}">
      <div class="grid grid-cols-[122px_160px] pl-[11px] pt-[2px]">
        ${item('i-scale', '设置比例', true)}${item('i-tableq', '识别楼层表', true)}
        ${item('i-swap', '查找替换', true)}${item('i-cadq', 'CAD识别选项')}
        ${item('i-restore', '还原CAD', true)}
      </div>${groupLabel('图纸操作', true)}
    </div>
    <div class="w-[414px] ${sep}">
      <div class="grid grid-cols-[99px_168px_130px] pl-[12px] pt-[2px]">
        ${item('i-def', '定义')}${item('i-copy', '复制到其它层', false, true)}${item('i-axis', '两点辅轴', false, true)}
        ${item('i-cloud', '云检查')}${item('i-level', '自动平齐顶板', true, true)}${item('i-dim', '长度标注', false, true)}
        ${item('i-lock', '锁定', false, true)}${item('i-save', '图元存盘', false, true)}${item('i-conv', '转换图元')}
      </div>${groupLabel('通用操作', true)}
    </div>
    <div class="w-[355px] ${sep}">
      <div class="grid grid-cols-[81px_78px_96px_80px] pl-[13px] pt-[2px]">
        ${item('i-trash', '删除')}${item('i-rotate', '旋转')}${item('i-trim', '修剪', true)}${item('i-offset', '偏移')}
        ${item('i-copy', '复制')}${item('i-mirror', '镜像')}${item('i-align', '对齐', false, true)}${item('i-merge', '合并')}
        ${item('i-move', '移动')}${item('i-extend', '延伸', true)}${item('i-break', '打断', true)}${item('i-split', '分割')}
      </div>${groupLabel('修改', true)}
    </div>
    <div class="w-[101px] ${sep}">
      <div class="grid grid-cols-[48px_48px] pl-[12px] pt-[2px]">
        ${item('i-point', '')}${item('i-gauge', '', true)}
        ${item('i-line', '', true)}${item('i-rect', '', true)}
        ${item('i-arc', '', true, true)}
      </div>${groupLabel('绘图', false, true)}
    </div>
    <div class="w-[398px] ${sep}">
      <div class="flex pl-[14px]">
        ${big('i-bigtab', '识别独基表', true, 'w-[96px]')}
        ${big('i-bigbox', '识别独立基础', true, 'w-[124px]')}
        <div class="ml-[6px]">${item('i-check', '校核独基图元', true)}</div>
      </div>${groupLabel('识别独立基础', false, true)}
    </div>
    <div class="w-[118px] ${sep}">
      <div class="flex">${big('i-smart', '智能布置', false, 'w-[96px]')}</div>
      <div class="w-[96px] text-center text-[9px] text-[#888] mt-[3px]">▾</div>
      ${groupLabel('智能布置', false, true)}
    </div>
    <div class="flex-1 relative overflow-hidden">
      <div class="pl-[12px] pt-[5px] flex flex-col">
        ${item('i-adjust', '调整钢筋方向')}${item('i-gen', '生成土方')}${item('i-edit', '查改标注')}
      </div>
      <div class="absolute left-[24px] top-[112px] h-[34px] flex items-center whitespace-nowrap">独立基础二次编辑</div>
    </div>`;

  // ---- property table ----
  const props = [
    ['截面形状', '带短柱杯口基础', 'b', 0, '#444'], ['截面长度(mm)', '4000', 'b', 0, '#999'], ['截面宽度(mm)', '6000', 'b', 0, '#999'],
    ['高度(mm)', '3000', 'b', 0, '#999'], ['横向受力筋', '虫12@200', 'b', 0, '#444'], ['纵向受力筋', '虫12@200', 'b', 0, '#444'],
    ['材质', '钢筋混凝土', 'b', 0, '#444'], ['混凝土类型', '(预拌混凝土)', 'b', 0, '#444'], ['混凝土强度等级', '(C30)', 'b', 0, '#444'],
    ['混凝土外加剂', '(无)', 'b', 0, '#444'], ['泵送类型', '(混凝土泵)', 'b', 0, '#444'], ['相对底标高(m)', '(0)', 'b', 0, '#444'],
    ['截面面积(m²)', '24', 'b', 0, '#999'], ['备注', '', 'd', 0, '#444'],
    ['短柱独基属性', '', 'd', '−', '#444'],
    ['角筋', '4虫20', 'b', 1, '#444', true], ['长边一侧中部筋', '2虫18', 'b', 1, '#444'], ['短边一侧中部筋', '2虫18', 'b', 1, '#444'],
    ['箍筋/拉筋', '虫16@200/300', 'b', 1, '#444'], ['短柱纵筋顶部弯...', '', 'd', 1, '#444'], ['短柱纵筋插筋弯...', 'max(6*d,150)', 'd', 1, '#444'],
    ['钢筋业务属性', '', 'd', '+', '#444'], ['土建业务属性', '', 'd', '+', '#444'],
  ];
  document.getElementById('props').innerHTML = props.map(([name, val, kind, lvl, valColor, sel]) => {
    const isGroup = lvl === '−' || lvl === '+';
    const lead = isGroup
      ? `<span class="ml-[8px] w-[19px] h-[15px] border border-[#aaa] rounded-[3px] text-[12px] leading-[12px] text-center text-[#555] shrink-0">${lvl}</span><span class="ml-[9px]"></span>`
      : lvl === 1
        ? '<span class="ml-[18px] w-[24px] border-t border-[#ddd] shrink-0"></span><span class="ml-[9px]"></span>'
        : '<span class="ml-[5px] w-[22px] border-t border-[#ddd] shrink-0"></span><span class="ml-[9px]"></span>';
    return `<div class="h-[31.5px] flex border-b border-[#e8e8e8] whitespace-nowrap">
      <div class="w-[200px] shrink-0 flex items-center border-r border-[#e4e4e4] overflow-hidden">${lead}<span class="${kind === 'b' ? 'text-[#2b7fe0]' : 'text-[#444]'}">${name}</span></div>
      <div class="flex-1 flex items-center pl-[5px] ${sel ? 'border-[3px] border-[#6a6a6a] pl-[2px]' : ''}" style="color:${valColor}">${val}</div>
    </div>`;
  }).join('');

  // ---- rebar shapes ----
  const line = 'stroke="#000" stroke-width="3" fill="none"';
  const sans = 'font-family="Noto Sans CJK SC, Liberation Sans" text-anchor="middle"';
  const red = (x, y, t, s = 20) => `<text x="${x}" y="${y}" fill="#e81010" font-size="${s}" ${sans}>${t}</text>`;
  const blk = (x, y, t, s = 20) => `<text x="${x}" y="${y}" fill="#222" font-size="${s}" ${sans}>${t}</text>`;
  const shp = (inner) => `<svg class="block" width="324" height="67" viewBox="0 0 324 67">${inner}</svg>`;
  const bent = (vx, t, lx) => shp(`<path d="M${vx} 23V49H317" ${line}/>` + blk(lx, 45, t) + red(vx < 60 ? 176 : 181, 37, 2920));
  const hook = (t) => shp(`<path d="M56 54L26 24V13H316V28L288 55" ${line}/>` + blk(165, 42, t));
  const rows = [
    ['4', '纵向底筋. 2', '12', '1', shp(`<path d="M28 47H317" ${line}/>` + red(178, 38, 5400)), '0. 9*6000', '0. 9*基础底宽', '(0)', '5400', '19', '0', '0'],
    ['5', '角筋. 2. 1', '20', '18', bent(65, 140, 39), '2400-40+35*d', 'H3+锚固', '42', '3018', '4', '0', '0'],
    ['6', '长边中部筋. 2. 1', '18', '18', bent(56, 70, 36), '2400-40+35*d', 'H3+锚固', '37', '2953', '4', '0', '0'],
    ['7', '短边中部筋. 2. 1', '18', '18', bent(56, 70, 36), '2400-40+35*d', 'H3+锚固', '37', '2953', '4', '0', '0'],
    ['8', '箍筋. 1', '16', '195', shp(`<rect x="158" y="6" width="93" height="58" ${line}/><path d="M214 23L237 8M231 37L248 18" ${line}/>` + blk(113, 43, 3920, 26) + red(191, 52, 2920, 26)), '2*((3000-2*40)+(4000-2*40)<br>)+2*(12.89*d)', '', '100', '13992', '14', '784', '0'],
    ['9', '长边拉筋. 1', '16', '485', hook(2920), '(3000-2*40)+2*(12.89*d)', '', '(0)', '3332', '6', '0', '0'],
    ['10', '短边拉筋. 1', '16', '485', hook(3920), '(4000-2*40)+2*(12.89*d)', '', '(0)', '4332', '6', '0', '0'],
  ];
  const headers = ['直径(mm)', '级别', '图号', '图形', '计算公式', '公式描述', '弯曲调整', '长度', '根数', '搭接', '损'];
  document.getElementById('rebarHead').innerHTML = `<tr class="h-[31px] font-['Noto_Sans_CJK_SC',sans-serif] font-normal text-[#444]">
    <th class="bg-white border-b-2 border-[#e0e0e0] p-0"></th>
    <th class="bg-[#7db8f5] text-white font-bold p-0">筋号</th>
    ${headers.map(h => `<th class="font-normal border-l-2 border-b-2 border-[#e4e4e4] p-0"><div class="h-[29px] flex items-center justify-center overflow-hidden whitespace-normal leading-[26px]">${h}</div></th>`).join('')}
  </tr>`;
  const td = 'border-l-2 border-b-2 border-[#d9e0e0] bg-[#c2dfe1] p-0 pl-[4px] align-middle leading-[23px]';
  document.getElementById('rebarBody').innerHTML = rows.map(r => `<tr class="h-[69px]">
      <td class="bg-[#f0f0f0] border-b-2 border-[#dcdcdc] p-0 text-center font-['Noto_Sans_CJK_SC',sans-serif] text-[#444]">${r[0]}</td>
      <td class="${td}">${r[1]}</td>
      <td class="${td}">${r[2]}</td>
      <td class="${td} font-['Noto_Sans_CJK_SC',sans-serif] font-bold text-[15px] pl-[5px]">虫</td>
      <td class="${td}">${r[3]}</td>
      <td class="${td} !pl-0">${r[4]}</td>
      <td class="${td}"><span class="whitespace-nowrap ${r[5].includes('(') ? 'tracking-[0.6px]' : ''}">${r[5]}</span></td>
      <td class="${td}">${r[6]}</td>
      <td class="${td}">${r[7]}</td><td class="${td}">${r[8]}</td><td class="${td}">${r[9]}</td>
      <td class="${td}">${r[10]}</td><td class="${td}">${r[11]}</td>
    </tr>`).join('') + `<tr class="h-[33px]">
      <td class="bg-[#f0f0f0] border-b-2 border-[#dcdcdc] p-0 text-center font-['Noto_Sans_CJK_SC',sans-serif] text-[#444]">11</td>
      ${Array(12).fill('<td class="border-l-2 border-b-2 border-[#e4e4e4]"></td>').join('')}
    </tr>`;

  // ---- display settings tree on the right ----
  const minus = { 0: 'l', 1: 'm', 9: 'm', 12: 'm', 17: 'm', 26: 'm' };
  let showHtml = '';
  for (let i = 0; i < 36; i++) {
    const box = minus[i] === 'l'
      ? '<span class="ml-[3px] w-[19px] h-[17px] border border-[#999] rounded-[3px] text-[12px] leading-[14px] text-center text-[#555] shrink-0">−</span><span class="ml-[5px] text-[#333]">所有构件</span>'
      : minus[i] === 'm'
        ? '<span class="ml-[17px] w-[19px] h-[17px] border border-[#999] rounded-[3px] text-[12px] leading-[14px] text-center text-[#555] shrink-0 bg-white">−</span>'
        : '<span class="ml-[27px] w-[1px] h-full bg-[#ddd] shrink-0"></span><span class="ml-[8px] w-[14px] h-full border-l border-t border-[#ddd] mt-[30px]"></span>';
    showHtml += `<div class="h-[31.4px] flex items-center whitespace-nowrap border-b border-[#ececec] overflow-hidden">${box}</div>`;
  }
  document.getElementById('showRows').innerHTML = showHtml;
</script>
</body>
</html>
